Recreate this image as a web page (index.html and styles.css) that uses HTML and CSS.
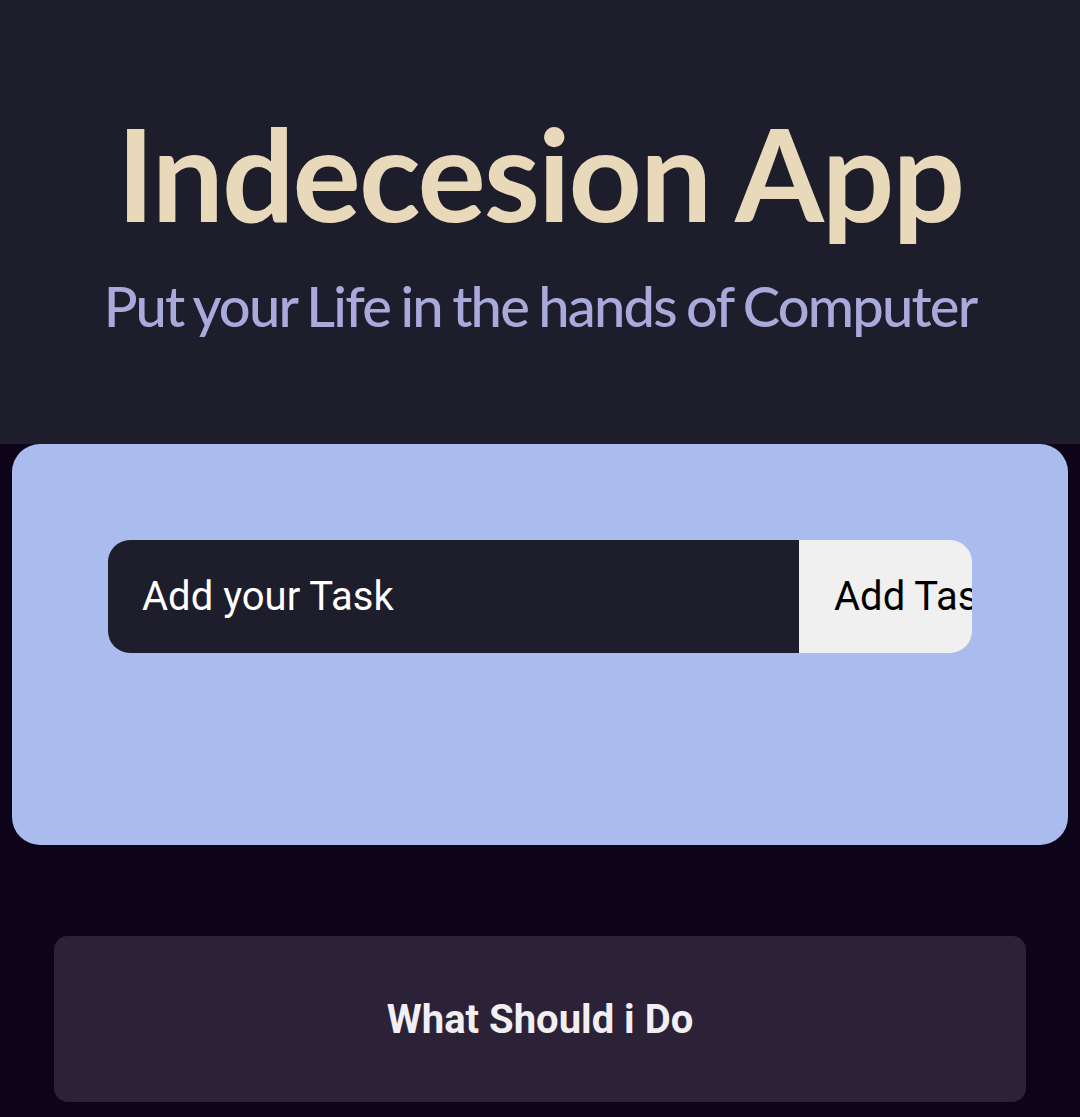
FILE: index.html
```html
<!DOCTYPE html>
<html>
<head>
<meta charset="utf-8">
<link rel="stylesheet" href="styles.css">
</head>
<body>
<header class="header">
  <h1 class="title">Indecesion App</h1>
  <p class="subtitle">Put your Life in the hands of Computer</p>
</header>
<main class="main">
  <section class="card">
    <form class="add-form">
      <div class="task-input">Add your Task</div>
      <div class="add-btn"><span>Add Task</span></div>
    </form>
  </section>
  <div class="pick-wrap">
    <div class="pick-btn">What Should i Do</div>
  </div>
</main>
</body>
</html>
```
FILE: styles.css
```css
html, body {
  margin: 0;
  padding: 0;
}
body {
  background: #0e041a;
  width: 1080px;
  height: 1117px;
  overflow: hidden;
  font-family: Roboto, "Liberation Sans", sans-serif;
}
.header {
  background: #1e1d2b;
  height: 444px;
  box-sizing: border-box;
  display: flex;
  flex-direction: column;
  align-items: center;
  padding-top: 108px;
}
.title {
  margin: 0;
  font-family: Lato, sans-serif;
  font-weight: 700;
  font-size: 128px;
  line-height: 130px;
  color: #e9d9bb;
  letter-spacing: -2px;
  white-space: nowrap;
}
.subtitle {
  margin: 38px 0 0;
  font-family: Lato, sans-serif;
  font-weight: 500;
  font-size: 56px;
  line-height: 60px;
  color: #a9a9dc;
  letter-spacing: -1.8px;
  word-spacing: -2px;
  white-space: nowrap;
}
.main {
  display: flex;
  flex-direction: column;
}
.card {
  margin: 0 12px;
  height: 401px;
  box-sizing: border-box;
  background: #aabbee;
  border-radius: 28px;
  padding: 96px 96px 0 96px;
}
.add-form {
  display: flex;
  height: 113px;
  margin: 0;
}
.task-input {
  width: 691px;
  background: #1e1d2b;
  border-radius: 22px 0 0 22px;
  color: #ffffff;
  font-size: 40px;
  display: flex;
  align-items: center;
  padding-left: 34px;
  box-sizing: border-box;
}
.add-btn {
  width: 173px;
  background: #f0f0f0;
  border-radius: 0 22px 22px 0;
  color: #000;
  font-size: 40px;
  display: flex;
  align-items: center;
  padding-left: 35px;
  box-sizing: border-box;
  overflow: hidden;
  white-space: nowrap;
}
.pick-wrap {
  padding: 91px 54px 0;
}
.pick-btn {
  height: 166px;
  background: #2c2237;
  border-radius: 14px;
  color: #f1eff4;
  font-weight: 700;
  font-size: 40px;
  display: flex;
  align-items: center;
  justify-content: center;
}
```
